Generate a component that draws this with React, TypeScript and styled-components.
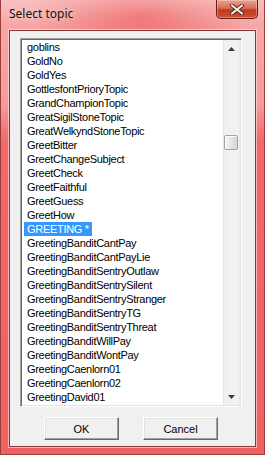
import { FunctionComponent, ReactElement } from 'react'
import styled, { createGlobalStyle } from 'styled-components'

interface ItemProps {
  $selected?: boolean;
}

interface ThumbProps {
  $offset: number;
}

const GlobalStyle = createGlobalStyle`
  html, body {
    margin: 0;
    padding: 0;
    background: #3fb8e0;
  }
`

const Window = styled.div`
  width: 265px;
  height: 455px;
  box-sizing: border-box;
  display: flex;
  flex-direction: column;
  padding: 0 8px 8px 8px;
  border: 1px solid #9c3c3c;
  border-top: none;
  background:
    linear-gradient(to bottom, rgba(255, 255, 255, 0.25) 0, rgba(255, 255, 255, 0) 26px),
    radial-gradient(ellipse 110px 45px at 140px 16px, rgba(238, 100, 100, 0.85), rgba(238, 100, 100, 0)),
    linear-gradient(to bottom, #f6aaaa 0, #f49c9c 105px, #ef6a6a 140px, #ee6262 100%);
`

const TitleBar = styled.div`
  height: 30px;
  flex: none;
  display: flex;
  align-items: flex-start;
  justify-content: space-between;
`

const Title = styled.span`
  margin-top: 6px;
  font-family: "Noto Sans", "Open Sans", sans-serif;
  font-size: 12px;
  line-height: 16px;
  color: #111;
  text-shadow: 0 0 6px rgba(255, 255, 255, 0.7);
`

const CloseButton = styled.div`
  width: 42px;
  height: 19px;
  box-sizing: border-box;
  margin-right: -2px;
  display: flex;
  align-items: center;
  justify-content: center;
  border: 1px solid #6a1a14;
  border-top: none;
  border-radius: 0 0 5px 5px;
  background: linear-gradient(to bottom, #e8a496 0, #d86e58 45%, #c23a1c 55%, #cc5034 100%);
  box-shadow: inset 0 0 0 1px rgba(255, 220, 210, 0.4);
`

const Client = styled.div`
  flex: 1;
  display: flex;
  flex-direction: column;
  padding: 7px 13px 6px 10px;
  background: #f0f0f0;
  border: 1px solid #8a3636;
  box-shadow: 0 0 0 1px rgba(255, 230, 230, 0.6);
`

const ListBox = styled.div`
  height: 369px;
  box-sizing: border-box;
  display: flex;
  border-top: 1px solid #a0a0a0;
  border-left: 1px solid #a0a0a0;
  border-right: 1px solid #ffffff;
  border-bottom: 1px solid #ffffff;
  box-shadow: inset 1px 1px 0 #696969, inset -1px -1px 0 #e3e3e3;
  padding: 1px;
`

const Items = styled.div`
  flex: 1;
  overflow: hidden;
  background: #ffffff;
`

const Item = styled.div<ItemProps>`
  width: fit-content;
  height: 14px;
  margin-left: 2px;
  padding: 0 3px;
  font-family: "Liberation Sans", Arial, sans-serif;
  font-size: 11px;
  letter-spacing: -0.3px;
  line-height: 14px;
  white-space: nowrap;
  color: ${props => (props.$selected ? '#ffffff' : '#000000')};
  background: ${props => (props.$selected ? '#3399ff' : 'transparent')};
`

const ScrollBar = styled.div`
  width: 17px;
  flex: none;
  display: flex;
  flex-direction: column;
  background: linear-gradient(to right, #e6e6e6 0, #f0f0f0 2px, #f2f2f2 15px, #e8e8e8 17px);
`

const ArrowButton = styled.div`
  height: 17px;
  flex: none;
  display: flex;
  align-items: center;
  justify-content: center;
`

const Track = styled.div`
  flex: 1;
`

const Thumb = styled.div<ThumbProps>`
  width: 14px;
  height: 15px;
  box-sizing: border-box;
  margin: ${props => props.$offset}px 0 0 1px;
  border: 1px solid #a2a2a2;
  border-radius: 2px;
  background: linear-gradient(to right, #f6f6f6, #e2e2e2 60%, #d6d6d6);
  box-shadow: inset 1px 1px 0 #ffffff;
`

const ButtonRow = styled.div`
  margin-top: 10px;
  display: flex;
  justify-content: center;
  gap: 24px;
`

const PushButton = styled.button`
  width: 75px;
  height: 23px;
  box-sizing: border-box;
  padding: 0;
  background: #f0f0f0;
  border-top: 1px solid #ffffff;
  border-left: 1px solid #ffffff;
  border-right: 1px solid #696969;
  border-bottom: 1px solid #696969;
  box-shadow: inset -1px -1px 0 #a0a0a0, inset 1px 1px 0 #e3e3e3;
  font-family: "Liberation Sans", Arial, sans-serif;
  font-size: 11px;
  color: #000;
`

const topics = [
  'goblins',
  'GoldNo',
  'GoldYes',
  'GottlesfontPrioryTopic',
  'GrandChampionTopic',
  'GreatSigilStoneTopic',
  'GreatWelkyndStoneTopic',
  'GreetBitter',
  'GreetChangeSubject',
  'GreetCheck',
  'GreetFaithful',
  'GreetGuess',
  'GreetHow',
  'GREETING *',
  'GreetingBanditCantPay',
  'GreetingBanditCantPayLie',
  'GreetingBanditSentryOutlaw',
  'GreetingBanditSentrySilent',
  'GreetingBanditSentryStranger',
  'GreetingBanditSentryTG',
  'GreetingBanditSentryThreat',
  'GreetingBanditWillPay',
  'GreetingBanditWontPay',
  'GreetingCaenlorn01',
  'GreetingCaenlorn02',
  'GreetingDavid01',
  'GreetingDavid02',
]

const CloseGlyph = (): ReactElement => (
  <svg width="16" height="11" viewBox="0 0 16 11">
    <path d="M3 1.5 L13 9.5 M13 1.5 L3 9.5" stroke="#5a2018" strokeWidth="4" strokeLinecap="round" />
    <path d="M3 1.5 L13 9.5 M13 1.5 L3 9.5" stroke="#f4f0f0" strokeWidth="2.2" strokeLinecap="round" />
  </svg>
)

const Arrow: FunctionComponent<{ down?: boolean }> = ({ down }): ReactElement => (
  <svg width="7" height="4" viewBox="0 0 7 4">
    <path d={down ? 'M0 0 H7 L3.5 4 Z' : 'M0 4 H7 L3.5 0 Z'} fill="#3a3a3a" />
  </svg>
)

const App: FunctionComponent = (): ReactElement => (
  <>
    <GlobalStyle />
    <Window>
      <TitleBar>
        <Title>Select topic</Title>
        <CloseButton>
          <CloseGlyph />
        </CloseButton>
      </TitleBar>
      <Client>
        <ListBox>
          <Items>
            {topics.map(topic => (
              <Item key={topic} $selected={topic === 'GREETING *'}>{topic}</Item>
            ))}
          </Items>
          <ScrollBar>
            <ArrowButton><Arrow /></ArrowButton>
            <Track>
              <Thumb $offset={78} />
            </Track>
            <ArrowButton><Arrow down /></ArrowButton>
          </ScrollBar>
        </ListBox>
        <ButtonRow>
          <PushButton>OK</PushButton>
          <PushButton>Cancel</PushButton>
        </ButtonRow>
      </Client>
    </Window>
  </>
)

export default App
